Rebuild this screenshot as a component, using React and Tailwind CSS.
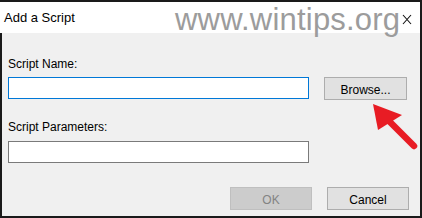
export default function App() {
  return (
    <div
      className="relative w-[422px] h-[218px] flex flex-col border-t-2 border-r-2 border-b-2 border-[#1a1a1a] bg-white overflow-hidden"
      style={{ fontFamily: '"Liberation Sans", Arial, sans-serif' }}
    >
      {/* title bar */}
      <div className="h-[31px] shrink-0 bg-white pl-[4px] pt-[8px] text-[13px] leading-[15px] text-black">Add a Script</div>

      {/* watermark */}
      <div className="absolute left-[175px] top-[2px] text-[31px] leading-none text-[#9c9c9c] tracking-[0.2px] select-none">www.wintips.org</div>

      {/* close */}
      <svg className="absolute left-[402px] top-[12px]" width="10" height="11" viewBox="0 0 10 11">
        <path d="M1 1 L9 10 M9 1 L1 10" stroke="#111" strokeWidth="1.1" fill="none" />
      </svg>

      {/* body */}
      <div className="flex-1 bg-[#f0f0f0] border-l-2 border-[#1a1a1a] pl-[6px] pt-[24px] text-[12px] leading-[14px] text-black">
        <div>Script Name:</div>
        <div className="mt-[6px] flex items-start gap-[15px]">
          <div className="w-[301px] h-[22px] bg-white border border-[#0078d7]" />
          <div className="w-[83px] h-[23px] bg-[#e1e1e1] border border-[#adadad] pt-[5px] text-center">Browse...</div>
        </div>

        <div className="mt-[20px]">Script Parameters:</div>
        <div className="mt-[7px] w-[301px] h-[22px] bg-white border border-[#7a7a7a]" />

        <div className="mt-[24px] flex justify-end gap-[15px] pr-[11px]">
          <div className="w-[82px] h-[23px] bg-[#cccccc] border border-[#bfbfbf] pt-[5px] text-center text-[#838383]">OK</div>
          <div className="w-[82px] h-[23px] bg-[#e1e1e1] border border-[#adadad] pt-[5px] text-center">Cancel</div>
        </div>
      </div>

      {/* red arrow */}
      <svg className="absolute left-[360px] top-[95px]" width="62" height="60" viewBox="0 0 62 60">
        <line x1="29" y1="24" x2="54" y2="49" stroke="#e81c24" strokeWidth="6.5" strokeLinecap="round" />
        <polygon points="13,7 18,33 42,18" fill="#e81c24" />
      </svg>
    </div>
  )
}
